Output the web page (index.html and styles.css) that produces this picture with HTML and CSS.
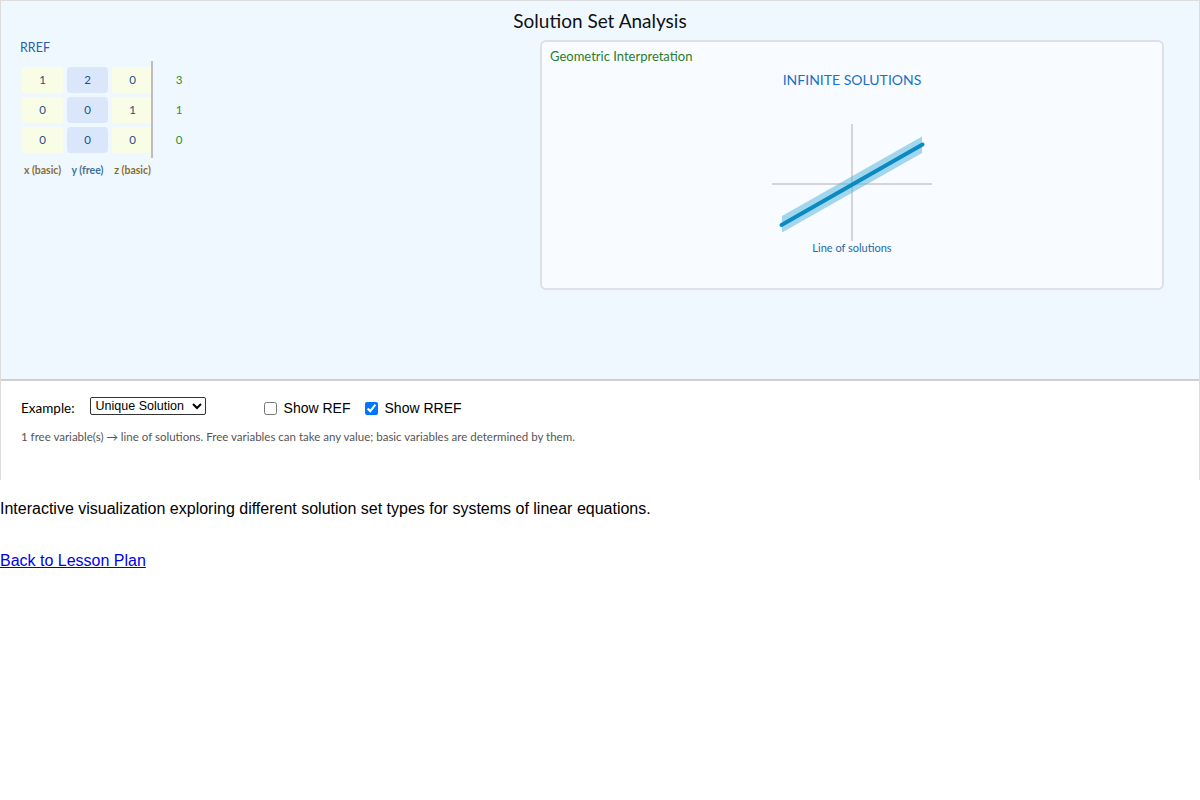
FILE: index.html
```html
<!DOCTYPE html>
<html lang="en">
<head>
    <meta charset="UTF-8">
    <title>Solution Set Analysis</title>
    <link rel="stylesheet" href="styles.css">
</head>
<body>
    <main class="sim">
        <div class="draw">
            <h1 class="title">Solution Set Analysis</h1>
            <div class="draw-body">
                <!-- matrix -->
                <section class="matrix-area">
                    <div class="mat-label">RREF</div>
                    <div class="matrix">
                        <div class="cell basic">1</div>
                        <div class="cell free">2</div>
                        <div class="cell basic">0</div>
                        <div class="aug">3</div>
                        <div class="cell basic">0</div>
                        <div class="cell free">0</div>
                        <div class="cell basic">1</div>
                        <div class="aug">1</div>
                        <div class="cell basic">0</div>
                        <div class="cell free">0</div>
                        <div class="cell basic">0</div>
                        <div class="aug">0</div>
                    </div>
                    <div class="var-labels">
                        <span class="vl basic-txt">x (basic)</span>
                        <span class="vl free-txt">y (free)</span>
                        <span class="vl basic-txt">z (basic)</span>
                    </div>
                </section>
                <!-- geometry -->
                <section class="geo-panel">
                    <div class="geo-title">Geometric Interpretation</div>
                    <div class="geo-type">INFINITE SOLUTIONS</div>
                    <svg class="geo-svg" width="160" height="117" viewBox="0 0 160 117">
                        <line x1="0" y1="60" x2="160" y2="60" stroke="#c8c8c8" stroke-width="1.5"/>
                        <line x1="80" y1="0" x2="80" y2="117" stroke="#c8c8c8" stroke-width="1.5"/>
                        <polygon points="10,92 150,12.5 150,29 10,108.5" fill="#5bb8de" fill-opacity="0.55"/>
                        <line x1="9.5" y1="101" x2="150.5" y2="20.5" stroke="#0a8ac2" stroke-width="4" stroke-linecap="round"/>
                    </svg>
                    <div class="geo-caption">Line of solutions</div>
                </section>
            </div>
        </div>
        <div class="controls">
            <div class="ctrl-row">
                <label class="ex-label" for="example">Example:</label>
                <select id="example">
                    <option>Unique Solution</option>
                    <option>Infinite Solutions</option>
                    <option>No Solution</option>
                </select>
                <label class="chk first"><input type="checkbox"> Show REF</label>
                <label class="chk"><input type="checkbox" checked> Show RREF</label>
            </div>
            <p class="desc">1 free variable(s) &rarr; line of solutions. Free variables can take any value; basic variables are determined by them.</p>
        </div>
    </main>
    <p class="intro">Interactive visualization exploring different solution set types for systems of linear equations.</p>
    <p class="back"><a href="#">Back to Lesson Plan</a></p>
</body>
</html>
```

FILE: styles.css
```css
body{
    margin: 0;
    font-family: "Liberation Sans", Arial, sans-serif;
    font-size: 16px;
}

.sim{
    width: 1200px;
    height: 480px;
    box-sizing: border-box;
    border: 1px solid #dcdcdc;
    font-family: Lato, "Noto Sans", sans-serif;
}

.draw{
    height: 378px;
    background-color: #f0f8ff;
    border-bottom: 2px solid #cfcfcf;
}

.title{
    margin: 0;
    height: 39px;
    line-height: 40px;
    text-align: center;
    font-size: 19px;
    font-weight: normal;
    color: #111;
}

.draw-body{
    display: flex;
    align-items: flex-start;
}

/* matrix side */
.matrix-area{
    padding-left: 19px;
}
.mat-label{
    font-size: 12.5px;
    line-height: 16px;
    color: #2760a8;
}
.matrix{
    position: relative;
    display: grid;
    grid-template-columns: 41px 41px 41px 48px;
    grid-auto-rows: 26px;
    column-gap: 4px;
    row-gap: 4px;
    margin: 11px 0 0 2px;
}
.matrix::after{
    content: "";
    position: absolute;
    left: 129px;
    top: -6px;
    width: 2px;
    height: 97px;
    background-color: #bdbdbd;
}
.cell{
    border-radius: 4px;
    text-align: center;
    line-height: 26px;
    font-size: 11.5px;
    color: #1d4f8c;
}
.cell.basic{
    background-color: #fafde6;
}
.cell.free{
    background-color: #dae7fb;
}
.aug{
    margin-left: -4px;
    text-align: center;
    line-height: 26px;
    font-size: 11.5px;
    color: #22962e;
}
.var-labels{
    display: grid;
    grid-template-columns: 41px 41px 41px;
    column-gap: 4px;
    margin: 10px 0 0 2px;
}
.vl{
    text-align: center;
    white-space: nowrap;
    font-size: 10.5px;
    font-weight: bold;
    line-height: 14px;
}
.basic-txt{
    color: #8a6c32;
}
.free-txt{
    color: #3b7393;
}

/* geometry side */
.geo-panel{
    margin-left: auto;
    margin-right: 35px;
    width: 624px;
    height: 250px;
    box-sizing: border-box;
    border: 2px solid #dde1e6;
    border-radius: 6px;
    background-color: #f8fbff;
    padding: 6px 8px 0;
}
.geo-title{
    font-size: 13px;
    line-height: 17px;
    color: #2a7d2e;
}
.geo-type{
    margin-top: 6px;
    text-align: center;
    font-size: 14px;
    line-height: 18px;
    color: #1b70c8;
}
.geo-svg{
    display: block;
    margin: 35px auto 0;
}
.geo-caption{
    text-align: center;
    font-size: 11px;
    line-height: 14px;
    color: #1f6aa3;
}

/* controls */
.controls{
    height: 99px;
    background-color: #fff;
    padding: 15px 0 0 20px;
    box-sizing: border-box;
}
.ctrl-row{
    display: flex;
    align-items: center;
    height: 20px;
}
.ex-label{
    font-size: 13.5px;
    margin-top: 4px;
}
select{
    margin-left: 15px;
    font-family: "Liberation Sans", Arial, sans-serif;
    font-size: 12.5px;
    height: 18px;
    padding: 0 1px;
    border: 1px solid #333;
    border-radius: 2px;
    background-color: #fff;
}
.chk{
    display: flex;
    align-items: center;
    font-family: "Liberation Sans", Arial, sans-serif;
    font-size: 14px;
    margin-top: 4px;
}
.chk input{
    margin: 0 7px 0 0;
    width: 13px;
    height: 13px;
}
.chk.first{
    margin-left: 58px;
}
.chk + .chk{
    margin-left: 14px;
}
.desc{
    margin: 14px 0 0;
    font-size: 11.5px;
    color: #555;
}

.intro{
    margin: 20px 0 0;
}
.back{
    margin: 34px 0 0;
}
```
